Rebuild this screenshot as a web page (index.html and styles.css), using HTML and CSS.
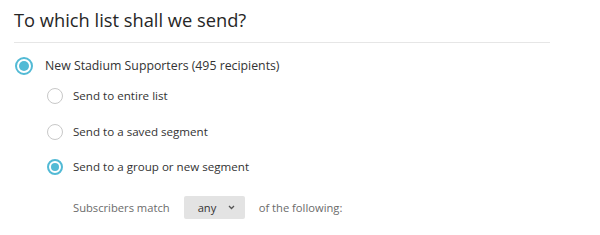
FILE: index.html
```html
<!DOCTYPE html>
<html>
<head>
<meta charset="utf-8">
<link rel="stylesheet" href="styles.css">
</head>
<body>
<div class="panel">
  <h1 class="title">To which list shall we send?</h1>
  <div class="list-row">
    <span class="radio radio-lg checked"></span>
    <span class="label">New Stadium Supporters (495 recipients)</span>
  </div>
  <div class="sub">
    <div class="opt-row">
      <span class="radio"></span>
      <span class="label sm">Send to entire list</span>
    </div>
    <div class="opt-row">
      <span class="radio"></span>
      <span class="label sm">Send to a saved segment</span>
    </div>
    <div class="opt-row">
      <span class="radio checked"></span>
      <span class="label sm">Send to a group or new segment</span>
    </div>
    <div class="match-row">
      <span class="muted">Subscribers match</span>
      <span class="select">any
        <svg class="chev" width="7" height="5" viewBox="0 0 7 5"><path d="M1 1 L3.5 3.5 L6 1" fill="none" stroke="#555" stroke-width="1.3"/></svg>
      </span>
      <span class="muted">of the following:</span>
    </div>
  </div>
</div>
</body>
</html>
```
FILE: styles.css
```css
* { box-sizing: border-box; }
body {
  margin: 0;
  background: #fff;
  font-family: "Open Sans", "Liberation Sans", sans-serif;
  color: #333;
}
.panel {
  width: 550px;
  padding-left: 14px;
}
.title {
  margin: 0;
  padding: 6px 0 8px;
  font-size: 18.3px;
  line-height: 28px;
  font-weight: 400;
  color: #262626;
  border-bottom: 1px solid #e6e6e6;
}
.list-row {
  display: flex;
  align-items: center;
  gap: 12px;
  height: 20px;
  margin-top: 13px;
  padding-left: 1px;
}
.label {
  font-size: 12.3px;
  line-height: 20px;
  color: #333;
}
.label.sm {
  font-size: 11.6px;
}
.sub {
  display: flex;
  flex-direction: column;
  gap: 15.5px;
  margin-top: 10px;
  padding-left: 33px;
}
.opt-row {
  display: flex;
  align-items: center;
  gap: 10px;
  height: 20px;
}
.radio {
  width: 16px;
  height: 16px;
  border-radius: 50%;
  border: 1px solid #c8c8c8;
  background: #fff;
  flex: none;
  position: relative;
}
.radio-lg {
  width: 18px;
  height: 18px;
}
.radio.checked {
  border: 2px solid #52bad5;
}
.radio.checked::after {
  content: "";
  position: absolute;
  inset: 2px;
  border-radius: 50%;
  background: #52bad5;
}
.match-row {
  display: flex;
  align-items: center;
  gap: 14px;
  margin-top: 3px;
  padding-left: 26px;
  height: 23px;
}
.muted {
  font-size: 11.2px;
  color: #6b6b6b;
}
.select {
  display: flex;
  align-items: center;
  gap: 12px;
  width: 61px;
  height: 23px;
  padding-left: 14px;
  background: #e3e3e3;
  border-radius: 2px;
  font-size: 11.2px;
  color: #333;
}
.chev { display: block; }
```
